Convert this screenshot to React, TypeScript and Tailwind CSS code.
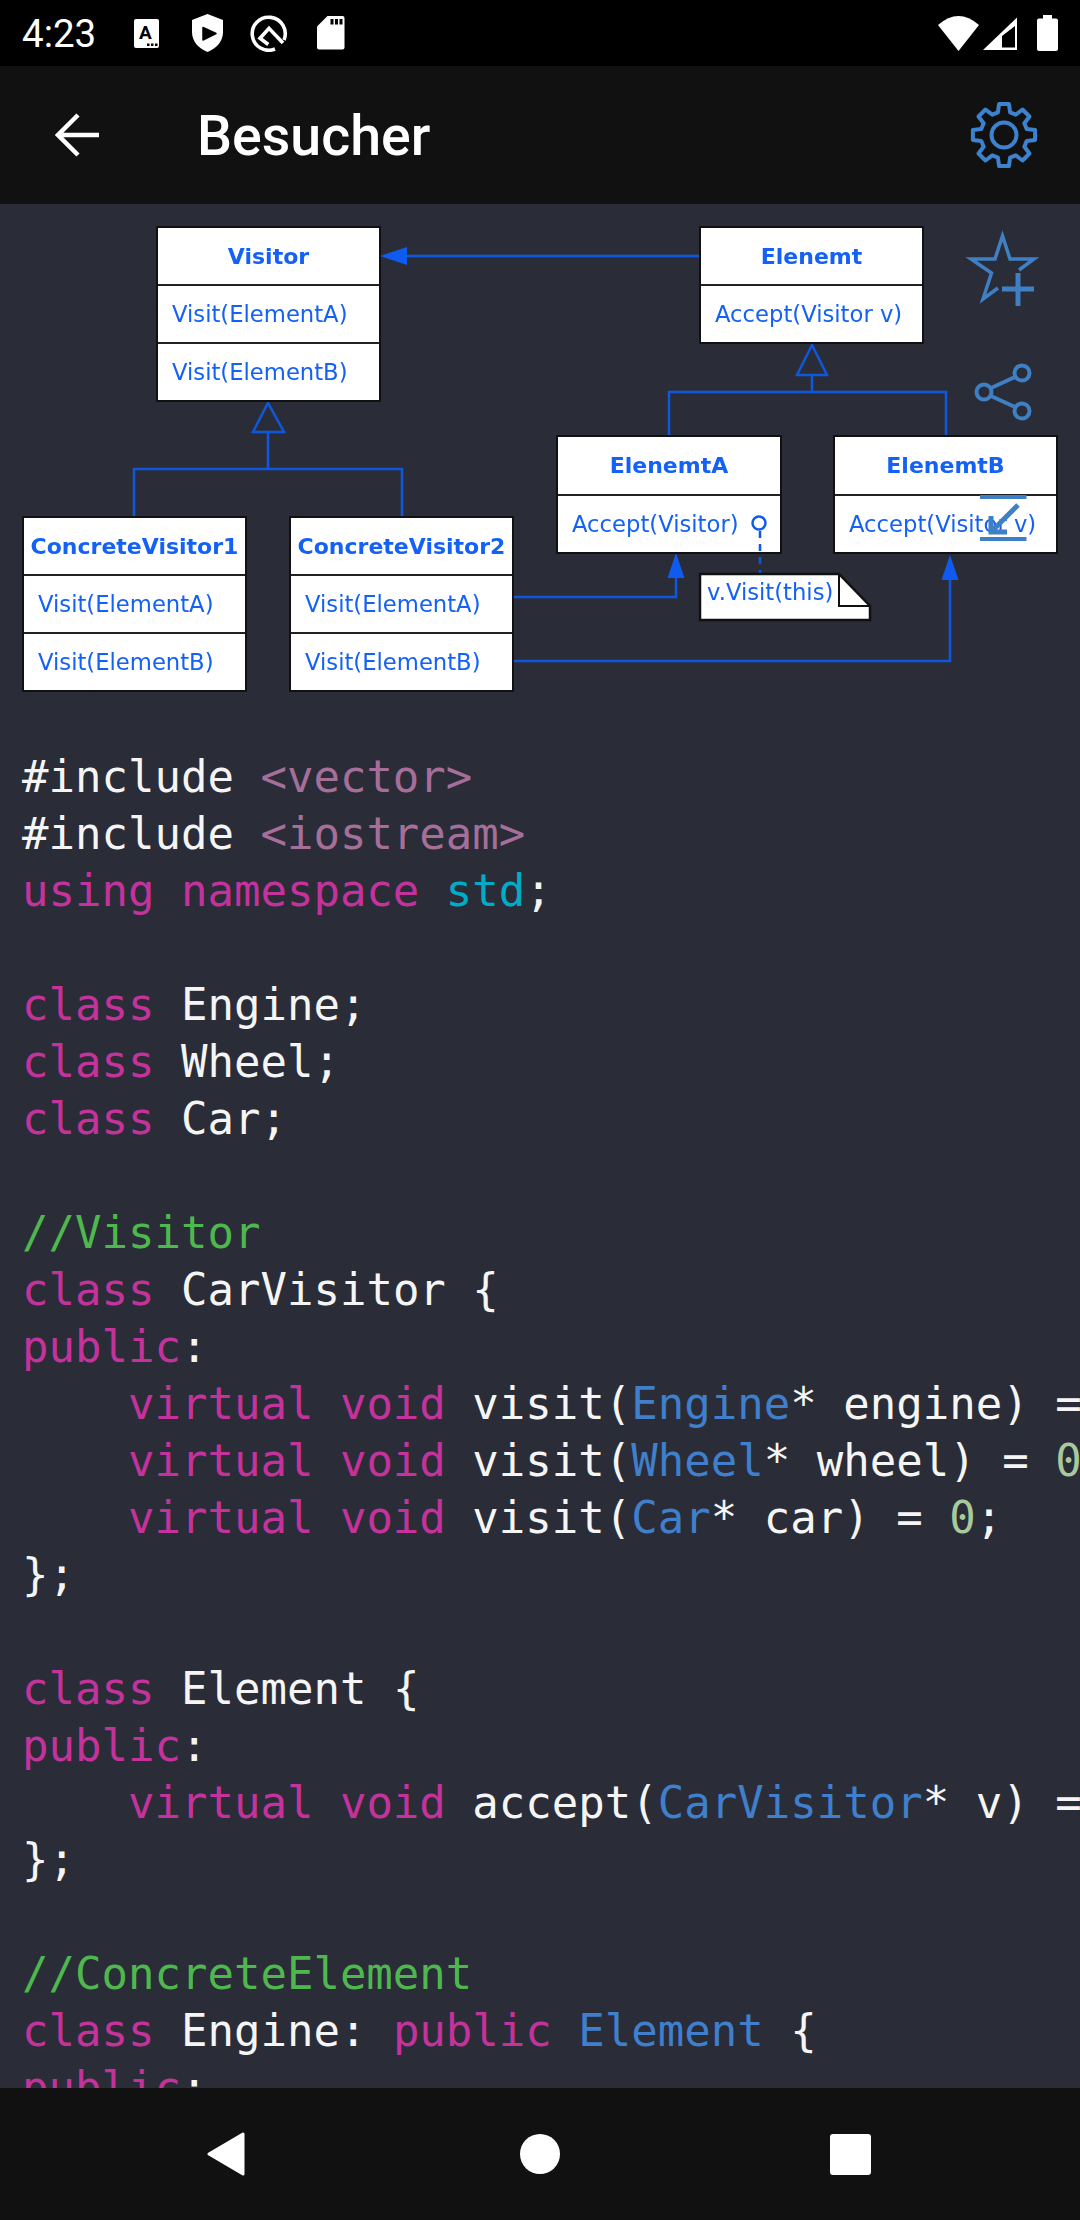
const kw = "text-[#c4329b]";
const str = "text-[#a56f9a]";
const typ = "text-[#3f7fcb]";
const cmt = "text-[#4eb84e]";
const num = "text-[#a9c99d]";
const ns = "text-[#00acc8]";

type Token = [string, string?];

const codeLines: Token[][] = [
  [["#include "], ["<vector>", str]],
  [["#include "], ["<iostream>", str]],
  [["using namespace ", kw], ["std", ns], [";"]],
  [],
  [["class ", kw], ["Engine;"]],
  [["class ", kw], ["Wheel;"]],
  [["class ", kw], ["Car;"]],
  [],
  [["//Visitor", cmt]],
  [["class ", kw], ["CarVisitor {"]],
  [["public", kw], [":"]],
  [["    "], ["virtual void ", kw], ["visit("], ["Engine", typ], ["* engine) = "], ["0", num], [";"]],
  [["    "], ["virtual void ", kw], ["visit("], ["Wheel", typ], ["* wheel) = "], ["0", num], [";"]],
  [["    "], ["virtual void ", kw], ["visit("], ["Car", typ], ["* car) = "], ["0", num], [";"]],
  [["};"]],
  [],
  [["class ", kw], ["Element {"]],
  [["public", kw], [":"]],
  [["    "], ["virtual void ", kw], ["accept("], ["CarVisitor", typ], ["* v) = "], ["0", num], [";"]],
  [["};"]],
  [],
  [["//ConcreteElement", cmt]],
  [["class ", kw], ["Engine: "], ["public ", kw], ["Element", typ], [" {"]],
  [["public", kw], [":"]],
];

function gearPath() {
  const cx = 35;
  const cy = 35;
  const pt = (deg: number, r: number) => {
    const a = (deg * Math.PI) / 180;
    return `${(cx + r * Math.sin(a)).toFixed(2)} ${(cy - r * Math.cos(a)).toFixed(2)}`;
  };
  let d = "";
  for (let i = 0; i < 8; i++) {
    const a = i * 45;
    d += `${i === 0 ? "M" : "L"}${pt(a - 15, 23.5)} L${pt(a - 9, 31.5)} L${pt(a + 9, 31.5)} L${pt(a + 15, 23.5)} `;
  }
  return d + "Z";
}

function UmlBox({ title, rows, className }: { title: string; rows: string[]; className: string }) {
  return (
    <div className={`absolute flex flex-col border-2 border-[#111] bg-white text-[#1461f5] blur-[0.5px] ${className}`}>
      <div className="flex flex-1 items-center justify-center text-[22px] font-bold">{title}</div>
      {rows.map((r) => (
        <div key={r} className="flex flex-1 items-center border-t-2 border-[#222] pl-[14px] text-[22.7px] whitespace-pre">
          {r}
        </div>
      ))}
    </div>
  );
}

function Connectors() {
  return (
    <svg className="absolute inset-0" width="1080" height="543" viewBox="0 204 1080 543" fill="none">
      <g stroke="#0f57dc" strokeWidth="2.5">
        <path d="M406 256H699" />
        <path d="M268 432V469M134 516V469H402V516" />
        <path d="M812 375V392M669 436V392H946V436" />
        <path d="M514 597H676V575" />
        <path d="M514 661H950V578" />
        <path d="M253 432L268 403L284 432Z" />
        <path d="M797 375L812 345L827 375Z" />
      </g>
      <g fill="#0f5bf0">
        <path d="M380 256L407 247V265Z" />
        <path d="M676 553L667.5 578H684.5Z" />
        <path d="M950 555L941.5 580H958.5Z" />
      </g>
    </svg>
  );
}

function NoteShape() {
  return (
    <svg className="absolute inset-0" width="1080" height="543" viewBox="0 204 1080 543" fill="none">
      <path d="M760 531V574" stroke="#0f57dc" strokeWidth="2.5" strokeDasharray="7 6" />
      <circle cx="759" cy="523" r="6.5" stroke="#0f5bf0" strokeWidth="2.5" fill="white" />
      <path d="M700 574H839L870 606V620H700Z" fill="white" stroke="#111" strokeWidth="2.5" />
      <path d="M839 574V606H870" stroke="#111" strokeWidth="2" />
    </svg>
  );
}

function OverlayIcons() {
  return (
    <svg className="absolute inset-0" width="1080" height="543" viewBox="0 204 1080 543" fill="none" stroke="#3f7fc4">
      {/* star plus */}
      <path d="M998 288L983 299L991.5 273L971 259H995L1002.5 236L1010 259H1034L1019 270" strokeWidth="3.5" />
      <path d="M1002 289H1034M1018 273V306" strokeWidth="5" />
      {/* share */}
      <g strokeWidth="4">
        <circle cx="1022" cy="373" r="7.5" />
        <circle cx="984" cy="392" r="7.5" />
        <circle cx="1022" cy="411" r="7.5" />
        <path d="M991 388L1015 377M991 396L1015 407" />
      </g>
      {/* save */}
      <path d="M980 497H1026.5M980 539H1026.5" strokeWidth="4" />
      <path d="M1018 505L991 532M991 516V532H1007" strokeWidth="5" />
    </svg>
  );
}

function StatusBar() {
  return (
    <div className="flex h-[66px] items-center bg-black pl-[22px] pr-[22px] text-white">
      <span className="mt-[2px] text-[38.5px] leading-none [font-family:Roboto,sans-serif]">4:23</span>
      <svg className="ml-[38px]" width="25" height="29" viewBox="0 0 25 29">
        <rect width="25" height="29" rx="2" fill="white" />
        <text x="5" y="20" fontSize="19" fontWeight="700" fontFamily="Roboto, sans-serif" fill="black">A</text>
        <path d="M13 24.5h2.5v2.5H13zM17 24.5h2.5v2.5H17zM21 24.5h2.5v2.5H21z" fill="black" />
      </svg>
      <svg className="ml-[33px]" width="31" height="38" viewBox="0 0 31 38">
        <path d="M15.5 0L31 6V18C31 28 24 34.5 15.5 38C7 34.5 0 28 0 18V6Z" fill="white" />
        <path d="M11 13.5L24 19.5L11 26Z" fill="black" stroke="black" strokeWidth="1.5" strokeLinejoin="round" />
      </svg>
      <svg className="ml-[27px]" width="38" height="38" viewBox="0 0 38 38" fill="none" stroke="white" strokeWidth="3.6">
        <path d="M25 35A16.5 16.5 0 1 1 34 26" />
        <path d="M18.3 30.5L10 24.3L19 14.3L33 29" />
      </svg>
      <svg className="ml-[29px]" width="27.5" height="33.5" viewBox="0 0 27.5 33.5">
        <path d="M10.5 0H25.5Q27.5 0 27.5 2V31.5Q27.5 33.5 25.5 33.5H2Q0 33.5 0 31.5V10.5Z" fill="white" />
        <path d="M13.5 3h3v5.5h-3zM18 3h3v5.5h-3zM22.5 3h3v5.5h-3z" fill="black" />
      </svg>
      <svg className="ml-auto" width="41" height="35" viewBox="0 0 41 35">
        <path d="M0 9Q20.5 -9 41 9L20.5 35Z" fill="white" />
      </svg>
      <svg className="ml-[3.5px]" width="34.5" height="33" viewBox="0 0 34.5 33">
        <path d="M0 33L34.5 0V33ZM19 30.5H32V9L19 19Z" fill="white" fillRule="evenodd" />
      </svg>
      <svg className="ml-[20px]" width="21" height="36" viewBox="0 0 21 36">
        <path d="M6 0H15V3.5H19Q21 3.5 21 5.5V34Q21 36 19 36H2Q0 36 0 34V5.5Q0 3.5 2 3.5H6Z" fill="white" />
      </svg>
    </div>
  );
}

export default function App() {
  return (
    <div className="flex h-[2220px] w-[1080px] flex-col overflow-hidden bg-[#2a2d38]">
      <StatusBar />
      <header className="flex h-[138px] shrink-0 items-center bg-[#111111] pl-[55px] pr-[41px]">
        <svg width="44" height="44" viewBox="0 0 44 44" fill="none" stroke="white" strokeWidth="4.5">
          <path d="M44 22H3M23 2L3 22L23 42" />
        </svg>
        <h1 className="ml-[98px] mt-[3px] text-[55.5px] font-medium leading-none text-white [font-family:Roboto,sans-serif]">Besucher</h1>
        <svg className="ml-auto" width="70" height="70" viewBox="0 0 70 70" fill="none" stroke="#3d82cf" strokeWidth="4" strokeLinejoin="round">
          <path d={gearPath()} />
          <circle cx="35" cy="35" r="12.5" />
        </svg>
      </header>
      <main className="min-h-0 flex-1 overflow-hidden">
        <div className="relative h-[544px] [font-family:'DejaVu_Sans',sans-serif]">
          <Connectors />
          <UmlBox title="Visitor" rows={["Visit(ElementA)", "Visit(ElementB)"]} className="left-[156px] top-[22px] h-[176px] w-[225px]" />
          <UmlBox title="ConcreteVisitor1" rows={["Visit(ElementA)", "Visit(ElementB)"]} className="left-[22px] top-[312px] h-[176px] w-[225px]" />
          <UmlBox title="ConcreteVisitor2" rows={["Visit(ElementA)", "Visit(ElementB)"]} className="left-[289px] top-[312px] h-[176px] w-[225px]" />
          <UmlBox title="Elenemt" rows={["Accept(Visitor v)"]} className="left-[699px] top-[22px] h-[118px] w-[225px]" />
          <UmlBox title="ElenemtA" rows={["Accept(Visitor)"]} className="left-[556px] top-[231px] h-[119px] w-[226px]" />
          <UmlBox title="ElenemtB" rows={["Accept(Visitor v)"]} className="left-[833px] top-[231px] h-[119px] w-[225px]" />
          <NoteShape />
          <span className="absolute left-[707px] top-[372px] text-[22.7px] leading-[32px] text-[#1461f5] blur-[0.5px]">v.Visit(this)</span>
          <OverlayIcons />
        </div>
        <pre className="pl-[22px] text-[44px] leading-[57px] text-[#f5f5f5] [font-family:'DejaVu_Sans_Mono',monospace]">
          {codeLines.map((line, i) => (
            <div key={i} className="h-[57px]">
              {line.map(([text, color], j) => (
                <span key={j} className={color}>
                  {text}
                </span>
              ))}
            </div>
          ))}
        </pre>
      </main>
      <nav className="flex h-[132px] shrink-0 items-center bg-[#111111] pl-[207px]">
        <svg width="38" height="44" viewBox="0 0 38 44">
          <path d="M36 2V42L2 22Z" fill="white" stroke="white" strokeWidth="3" strokeLinejoin="round" />
        </svg>
        <div className="ml-[275px] h-[40px] w-[40px] rounded-full bg-white" />
        <div className="ml-[270px] h-[41px] w-[41px] rounded-[3px] bg-white" />
      </nav>
    </div>
  );
}
